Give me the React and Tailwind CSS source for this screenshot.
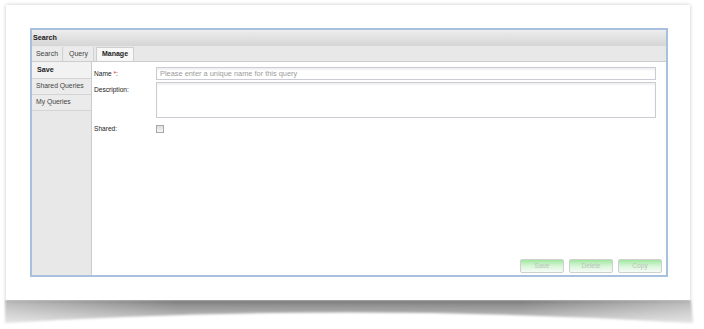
import React from 'react';

const tabs = [
    { label: 'Search', w: 'w-[31px]' },
    { label: 'Query', w: 'w-[30px]' },
    { label: 'Manage', w: 'w-[38px]', active: true },
];

const navItems = [
    { label: 'Save', active: true },
    { label: 'Shared Queries' },
    { label: 'My Queries' },
];

function PaperShadow() {
    return (
        <svg className="absolute left-0 top-[298px]" width="704" height="31" viewBox="0 0 704 31">
            <defs>
                <linearGradient id="shd" x1="0" y1="0" x2="0" y2="1">
                    <stop offset="0" stopColor="#7e7e7e" />
                    <stop offset="0.5" stopColor="#a8a8a8" />
                    <stop offset="1" stopColor="#d2d2d2" />
                </linearGradient>
                <linearGradient id="shdSide" x1="0" y1="0" x2="1" y2="0">
                    <stop offset="0" stopColor="#ffffff" stopOpacity="0.45" />
                    <stop offset="0.25" stopColor="#ffffff" stopOpacity="0" />
                    <stop offset="0.75" stopColor="#ffffff" stopOpacity="0" />
                    <stop offset="1" stopColor="#ffffff" stopOpacity="0.45" />
                </linearGradient>
                <filter id="blr" x="-5%" y="-50%" width="110%" height="200%">
                    <feGaussianBlur stdDeviation="1.2" />
                </filter>
            </defs>
            <g filter="url(#blr)">
                <path d="M5,2 H691 L693,25 Q349,4 5,25 Z" fill="url(#shd)" />
                <path d="M5,2 H691 L693,25 Q349,4 5,25 Z" fill="url(#shdSide)" />
            </g>
        </svg>
    );
}

export default function App() {
    return (
        <div
            className="relative w-[704px] h-[329px] bg-white overflow-hidden text-[#222]"
            style={{ fontFamily: '"Liberation Sans", Arial, sans-serif' }}
        >
            <PaperShadow />
            <div className="relative ml-[6px] mt-[5px] w-[684px] h-[295px] bg-white shadow-[0_0_4px_rgba(0,0,0,0.22)] pl-[24px] pt-[23px]">
                {/* panel */}
                <div className="w-[638px] h-[249px] border-2 border-[#a6c0de] flex flex-col bg-white">
                    <div className="h-[16px] bg-gradient-to-b from-[#ededed] to-[#d5d5d5] flex items-center pl-[1px] text-[7.2px] font-bold text-[#1a1a1a]">
                        Search
                    </div>
                    <div className="h-[16px] bg-[#e8e8e8] border-b border-[#cdcdcd] flex items-end gap-[1px]">
                        {tabs.map((t) => (
                            <div
                                key={t.label}
                                className={
                                    t.active
                                        ? `${t.w} h-[14px] ml-[1px] bg-[#f7f7f7] border border-b-0 border-[#cfcfcf] flex items-center justify-center text-[7px] font-bold text-[#222]`
                                        : `${t.w} h-[14px] bg-[#ebebeb] border-r border-[#d2d2d2] flex items-center justify-center text-[7px] text-[#444]`
                                }
                            >
                                {t.label}
                            </div>
                        ))}
                    </div>
                    <div className="flex flex-1">
                        <div className="w-[60px] bg-[#e8e8e8] border-r border-[#cccccc] flex flex-col">
                            {navItems.map((n) => (
                                <div
                                    key={n.label}
                                    className={
                                        n.active
                                            ? 'h-[17px] bg-[#f2f2f2] border-b border-[#d4d4d4] flex items-center pl-[5px] text-[7.2px] font-bold text-[#222]'
                                            : 'h-[16px] bg-[#ebebeb] border-b border-[#d4d4d4] flex items-center pl-[4px] text-[6.8px] text-[#444]'
                                    }
                                >
                                    {n.label}
                                </div>
                            ))}
                        </div>
                        <div className="flex-1 flex flex-col pl-[2px] pr-[4px] pt-[5px] pb-[2px]">
                            <div className="flex items-center h-[13px]">
                                <div className="w-[62px] text-[6.6px] text-[#222]">
                                    Name <span className="text-[#e33]">*</span>:
                                </div>
                                <div className="w-[500px] h-[13px] border border-[#cbcbd6] shadow-[inset_0_2px_2px_rgba(0,0,0,0.06)] flex items-center pl-[3px] text-[7.4px] text-[#9a9a9a]">
                                    Please enter a unique name for this query
                                </div>
                            </div>
                            <div className="flex mt-[2px]">
                                <div className="w-[62px] text-[6.6px] text-[#222] pt-[3px]">Description:</div>
                                <div className="w-[500px] h-[36px] border border-[#cbcbd6] shadow-[inset_0_2px_2px_rgba(0,0,0,0.06)]" />
                            </div>
                            <div className="flex items-center mt-[6px]">
                                <div className="w-[62px] text-[6.6px] text-[#222]">Shared:</div>
                                <div className="w-[8px] h-[8px] border border-[#a9a9a9] bg-gradient-to-b from-[#dcdcdc] to-[#f6f6f6]" />
                            </div>
                            <div className="mt-auto flex justify-end gap-[5px]">
                                {['Save', 'Delete', 'Copy'].map((b) => (
                                    <div
                                        key={b}
                                        className="w-[44px] h-[14px] rounded-[2px] border border-[#cfcfcf] bg-gradient-to-b from-[#9ee89e] via-[#d8f5d8] to-[#f7fbf7] flex items-center justify-center text-[6.6px] text-[#b8c4b8]"
                                    >
                                        {b}
                                    </div>
                                ))}
                            </div>
                        </div>
                    </div>
                </div>
            </div>
        </div>
    );
}
